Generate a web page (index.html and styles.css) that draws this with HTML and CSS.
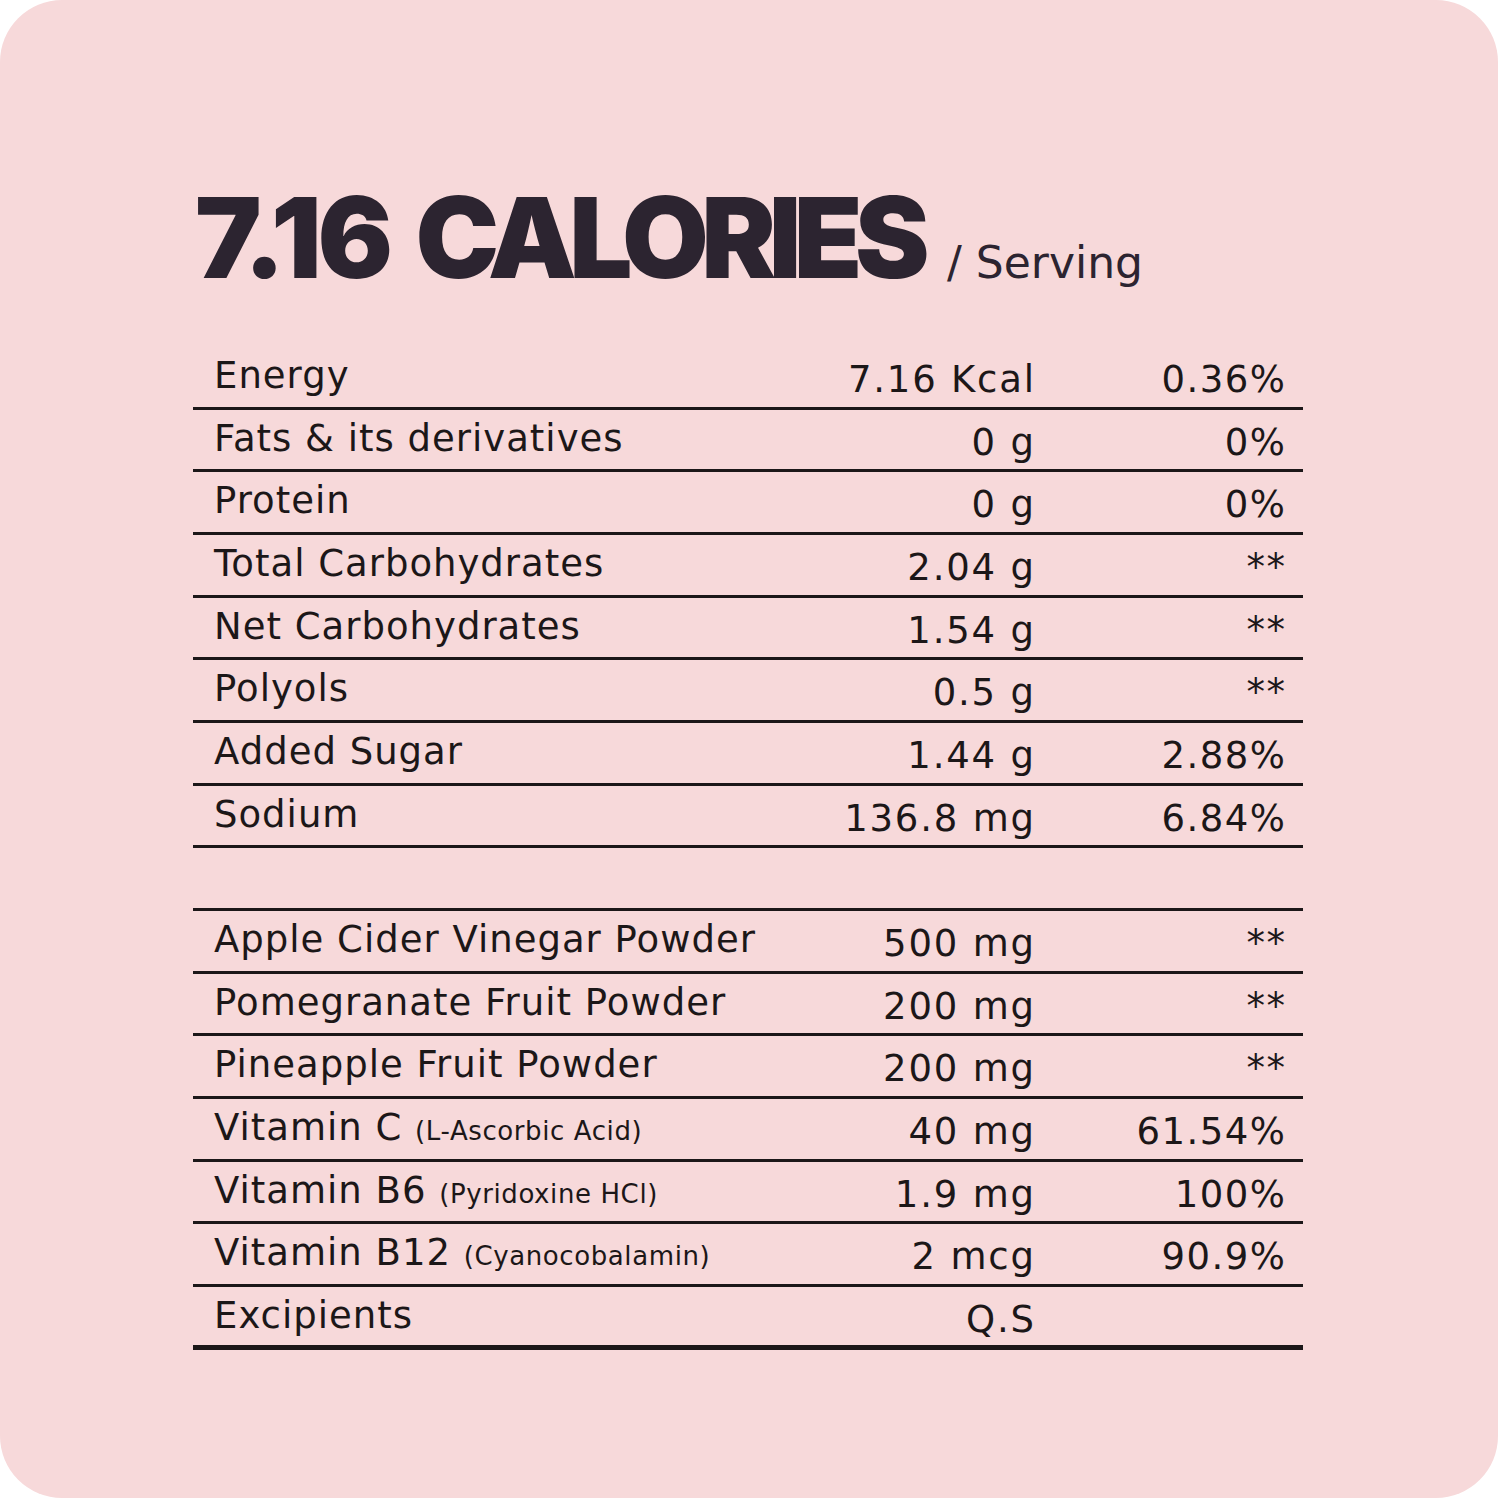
FILE: index.html
```html
<!DOCTYPE html>
<html lang="en">
<head>
<meta charset="utf-8">
<title>Nutrition Facts</title>
<link rel="stylesheet" href="styles.css">
</head>
<body>
<div class="card">
  <div class="headline">
    <h1 class="calories"><span class="num">7.16</span> <span class="word">CALORIES</span></h1>
    <span class="serving">/ Serving</span>
  </div>
  <div class="facts">
    <div class="row"><span class="label">Energy</span><span class="val">7.16 Kcal</span><span class="pct">0.36%</span></div>
    <div class="row"><span class="label">Fats &amp; its derivatives</span><span class="val">0 g</span><span class="pct">0%</span></div>
    <div class="row"><span class="label">Protein</span><span class="val">0 g</span><span class="pct">0%</span></div>
    <div class="row"><span class="label">Total Carbohydrates</span><span class="val">2.04 g</span><span class="pct">**</span></div>
    <div class="row"><span class="label">Net Carbohydrates</span><span class="val">1.54 g</span><span class="pct">**</span></div>
    <div class="row"><span class="label">Polyols</span><span class="val">0.5 g</span><span class="pct">**</span></div>
    <div class="row"><span class="label">Added Sugar</span><span class="val">1.44 g</span><span class="pct">2.88%</span></div>
    <div class="row"><span class="label">Sodium</span><span class="val">136.8 mg</span><span class="pct">6.84%</span></div>
    <div class="row spacer"></div>
    <div class="row"><span class="label">Apple Cider Vinegar Powder</span><span class="val">500 mg</span><span class="pct">**</span></div>
    <div class="row"><span class="label">Pomegranate Fruit Powder</span><span class="val">200 mg</span><span class="pct">**</span></div>
    <div class="row"><span class="label">Pineapple Fruit Powder</span><span class="val">200 mg</span><span class="pct">**</span></div>
    <div class="row"><span class="label">Vitamin C <small class="sub">(L-Ascorbic Acid)</small></span><span class="val">40 mg</span><span class="pct">61.54%</span></div>
    <div class="row"><span class="label">Vitamin B6 <small class="sub">(Pyridoxine HCl)</small></span><span class="val">1.9 mg</span><span class="pct">100%</span></div>
    <div class="row"><span class="label">Vitamin B12 <small class="sub">(Cyanocobalamin)</small></span><span class="val">2 mcg</span><span class="pct">90.9%</span></div>
    <div class="row last"><span class="label">Excipients</span><span class="val">Q.S</span><span class="pct"></span></div>
  </div>
</div>
</body>
</html>
```

FILE: styles.css
```css
html, body {
  margin: 0;
  padding: 0;
  background: #ffffff;
}

.card {
  width: 1498px;
  height: 1498px;
  box-sizing: border-box;
  background: #f7d9da;
  border-radius: 62px;
  padding: 181px 195px 0 193px;
  color: #1c1718;
}

.headline {
  display: flex;
  align-items: baseline;
  gap: 25px;
  padding-left: 2px;
}

.calories {
  margin: 0;
  font-family: Inter, "Liberation Sans", sans-serif;
  font-weight: 900;
  font-size: 112px;
  line-height: 1;
  color: #2c2430;
  white-space: nowrap;
}

.calories .num {
  letter-spacing: -4px;
}

.calories .word {
  letter-spacing: -7.5px;
  margin-left: 4px;
}

.serving {
  font-family: "DejaVu Sans", sans-serif;
  font-size: 44px;
  color: #2c2430;
}

.facts {
  margin-top: 54px;
  display: flex;
  flex-direction: column;
}

.row {
  display: grid;
  grid-template-columns: 1fr 230px 251px;
  height: 62.67px;
  box-sizing: border-box;
  border-bottom: 3.3px solid #1c1718;
  padding: 0 18px 0 21px;
  font-family: "DejaVu Sans", sans-serif;
  font-size: 37px;
  line-height: 1;
}

.row.last {
  border-bottom-width: 5px;
}

.label {
  padding-top: 10px;
  white-space: nowrap;
  letter-spacing: 1px;
}

.sub {
  font-size: 26px;
  letter-spacing: 0.6px;
}

.val, .pct {
  text-align: right;
  padding-top: 14px;
  white-space: nowrap;
}

.val {
  letter-spacing: 1.8px;
  margin-right: -1.8px;
}

.pct {
  letter-spacing: 1.5px;
  margin-right: -1.5px;
}
```
